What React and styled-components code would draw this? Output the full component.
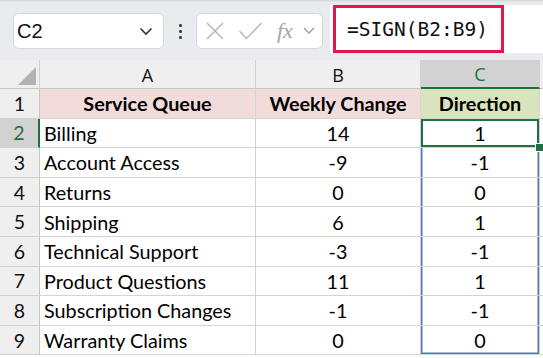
import styled, { createGlobalStyle } from "styled-components";

const rows = [
  ["Billing", "14", "1"],
  ["Account Access", "-9", "-1"],
  ["Returns", "0", "0"],
  ["Shipping", "6", "1"],
  ["Technical Support", "-3", "-1"],
  ["Product Questions", "11", "1"],
  ["Subscription Changes", "-1", "-1"],
  ["Warranty Claims", "0", "0"],
];

const GREEN = "#1e7145";
const BLUE = "#4a78c2";

function App() {
  return (
    <Page>
      <GlobalStyle />
      <Toolbar>
        <NameBox>
          <span>C2</span>
          <Chevron width="14" height="9" viewBox="0 0 14 9">
            <path d="M1.5 1.5 L7 7 L12.5 1.5" fill="none" stroke="#333" strokeWidth="1.6" />
          </Chevron>
        </NameBox>
        <Dots>
          <i />
          <i />
          <i />
        </Dots>
        <FuncBox>
          <svg width="18" height="18" viewBox="0 0 18 18">
            <path d="M1 1 L17 17 M17 1 L1 17" stroke="#b4b4b4" strokeWidth="1.4" fill="none" />
          </svg>
          <svg width="25" height="20" viewBox="0 0 25 20">
            <path d="M1.5 10 L8.5 17.5 L23.5 2" stroke="#b4b4b4" strokeWidth="1.4" fill="none" />
          </svg>
          <Fx>fx</Fx>
          <svg width="12" height="8" viewBox="0 0 12 8">
            <path d="M1 1 L6 6 L11 1" fill="none" stroke="#9a9a9a" strokeWidth="1.3" />
          </svg>
        </FuncBox>
        <FormulaBox>
          <Formula>=SIGN(B2:B9)</Formula>
        </FormulaBox>
      </Toolbar>

      <Grid>
        <Corner>
          <svg width="18" height="18" viewBox="0 0 18 18">
            <path d="M18 0 L18 18 L0 18 Z" fill="#b2b2b2" />
          </svg>
        </Corner>
        <ColHead>A</ColHead>
        <ColHead>B</ColHead>
        <ColHead $active>C</ColHead>
        <ColHead $tail />

        <RowHead>1</RowHead>
        <Cell $bg="#f2dcdb" $bold $center>Service Queue</Cell>
        <Cell $bg="#f2dcdb" $bold $center>Weekly Change</Cell>
        <Cell $bg="#d8e4bc" $bold $center>Direction</Cell>
        <Cell $tail />

        {rows.map((r, i) => (
          <Row key={i} num={i + 2} data={r} last={i === rows.length - 1} />
        ))}
      </Grid>
    </Page>
  );
}

function Row({ num, data, last }) {
  const selected = num === 2;
  return (
    <>
      <RowHead $active={selected}>{num}</RowHead>
      <Cell>{data[0]}</Cell>
      <Cell $center>{data[1]}</Cell>
      <Cell $center $range={!selected} $last={last} $selected={selected}>
        {data[2]}
        {selected && <Handle />}
      </Cell>
      <Cell $tail />
    </>
  );
}

export default App;

const GlobalStyle = createGlobalStyle`
  body {
    margin: 0;
    background: #fff;
  }
`;

const Page = styled.div`
  width: 543px;
  height: 358px;
  overflow: hidden;
  background: #fff;
`;

const Toolbar = styled.div`
  height: 60px;
  background: #e9ebee;
  display: flex;
  align-items: flex-start;
  box-shadow: inset 0 3px 2px -2px #cfd1d4;
`;

const NameBox = styled.div`
  margin: 13px 0 0 13px;
  width: 151px;
  height: 36px;
  box-sizing: border-box;
  background: #fff;
  border: 1px solid #d6d8db;
  border-radius: 6px;
  display: flex;
  align-items: center;
  justify-content: space-between;
  padding: 0 10px 0 3px;
  font-family: "Liberation Sans", Arial, sans-serif;
  font-size: 20px;
  color: #111;
`;

const Chevron = styled.svg`
  display: block;
`;

const Dots = styled.div`
  width: 32px;
  height: 36px;
  margin-top: 13px;
  display: flex;
  flex-direction: column;
  align-items: center;
  justify-content: center;
  gap: 3px;
  i {
    width: 3px;
    height: 3px;
    background: #444;
    border-radius: 1px;
  }
`;

const FuncBox = styled.div`
  margin-top: 13px;
  width: 127px;
  height: 36px;
  box-sizing: border-box;
  background: #fff;
  border: 1px solid #d6d8db;
  border-radius: 6px;
  display: flex;
  align-items: center;
  gap: 14px;
  padding: 0 6px 0 9px;
  svg {
    display: block;
  }
`;

const Fx = styled.span`
  font-family: "Liberation Serif", "Times New Roman", serif;
  font-style: italic;
  font-size: 22px;
  color: #a6a6a6;
  margin-right: -4px;
`;

const FormulaBox = styled.div`
  margin: 5px 0 0 7px;
  flex: 1;
  height: 48px;
  background: #fff;
  display: flex;
  align-items: stretch;
`;

const Formula = styled.div`
  margin-left: 3px;
  width: 171px;
  box-sizing: border-box;
  border: 3px solid #e0194a;
  display: flex;
  align-items: center;
  padding-left: 11px;
  font-family: "DejaVu Sans Mono", "Liberation Mono", monospace;
  font-size: 19.5px;
  color: #111;
`;

const Grid = styled.div`
  display: grid;
  grid-template-columns: 40px 216px 165px 119px 3px;
  grid-template-rows: 29px repeat(9, 29.6px);
  font-family: Lato, "Open Sans", sans-serif;
  color: #000;
`;

const Corner = styled.div`
  background: #efefef;
  border-right: 1px solid #d0d0d0;
  border-bottom: 1px solid #c6c6c6;
  display: flex;
  align-items: flex-end;
  justify-content: flex-end;
  padding: 0 3px 3px 0;
`;

const ColHead = styled.div`
  background: ${({ $active }) => ($active ? "#d2d2d2" : "#efefef")};
  color: ${({ $active }) => ($active ? GREEN : "#111")};
  border-right: ${({ $tail }) => ($tail ? "none" : "1px solid #d0d0d0")};
  border-bottom: ${({ $active }) => ($active ? `2px solid ${GREEN}` : "1px solid #c6c6c6")};
  display: flex;
  align-items: center;
  justify-content: center;
  font-family: "Open Sans", "Liberation Sans", sans-serif;
  font-size: 18px;
  padding-top: 1px;
`;

const RowHead = styled.div`
  background: ${({ $active }) => ($active ? "#d2d2d2" : "#efefef")};
  color: ${({ $active }) => ($active ? GREEN : "#111")};
  border-right: ${({ $active }) => ($active ? `2px solid ${GREEN}` : "1px solid #c6c6c6")};
  border-bottom: 1px solid #d0d0d0;
  display: flex;
  align-items: center;
  justify-content: center;
  font-size: 19.5px;
`;

const rangeShadow = ({ $range, $last, $selected }) => {
  if ($selected) return `inset 0 0 0 2px ${GREEN}`;
  if (!$range) return "none";
  const sides = `inset 1.5px 0 0 ${BLUE}, inset -1.5px 0 0 ${BLUE}`;
  return $last ? `${sides}, inset 0 -1.5px 0 ${BLUE}` : sides;
};

const Cell = styled.div`
  position: relative;
  background: ${({ $bg }) => $bg || "#fff"};
  border-right: ${({ $tail }) => ($tail ? "none" : "1px solid #d4d4d4")};
  border-bottom: 1px solid #d4d4d4;
  box-shadow: ${rangeShadow};
  display: flex;
  align-items: center;
  justify-content: ${({ $center }) => ($center ? "center" : "flex-start")};
  padding-left: ${({ $center }) => ($center ? "0" : "4px")};
  font-weight: ${({ $bold }) => ($bold ? 700 : 400)};
  font-size: 19.8px;
  white-space: nowrap;
`;

const Handle = styled.div`
  position: absolute;
  right: -5px;
  bottom: -5px;
  width: 7px;
  height: 7px;
  background: ${GREEN};
  border: 1px solid #fff;
  z-index: 2;
`;
